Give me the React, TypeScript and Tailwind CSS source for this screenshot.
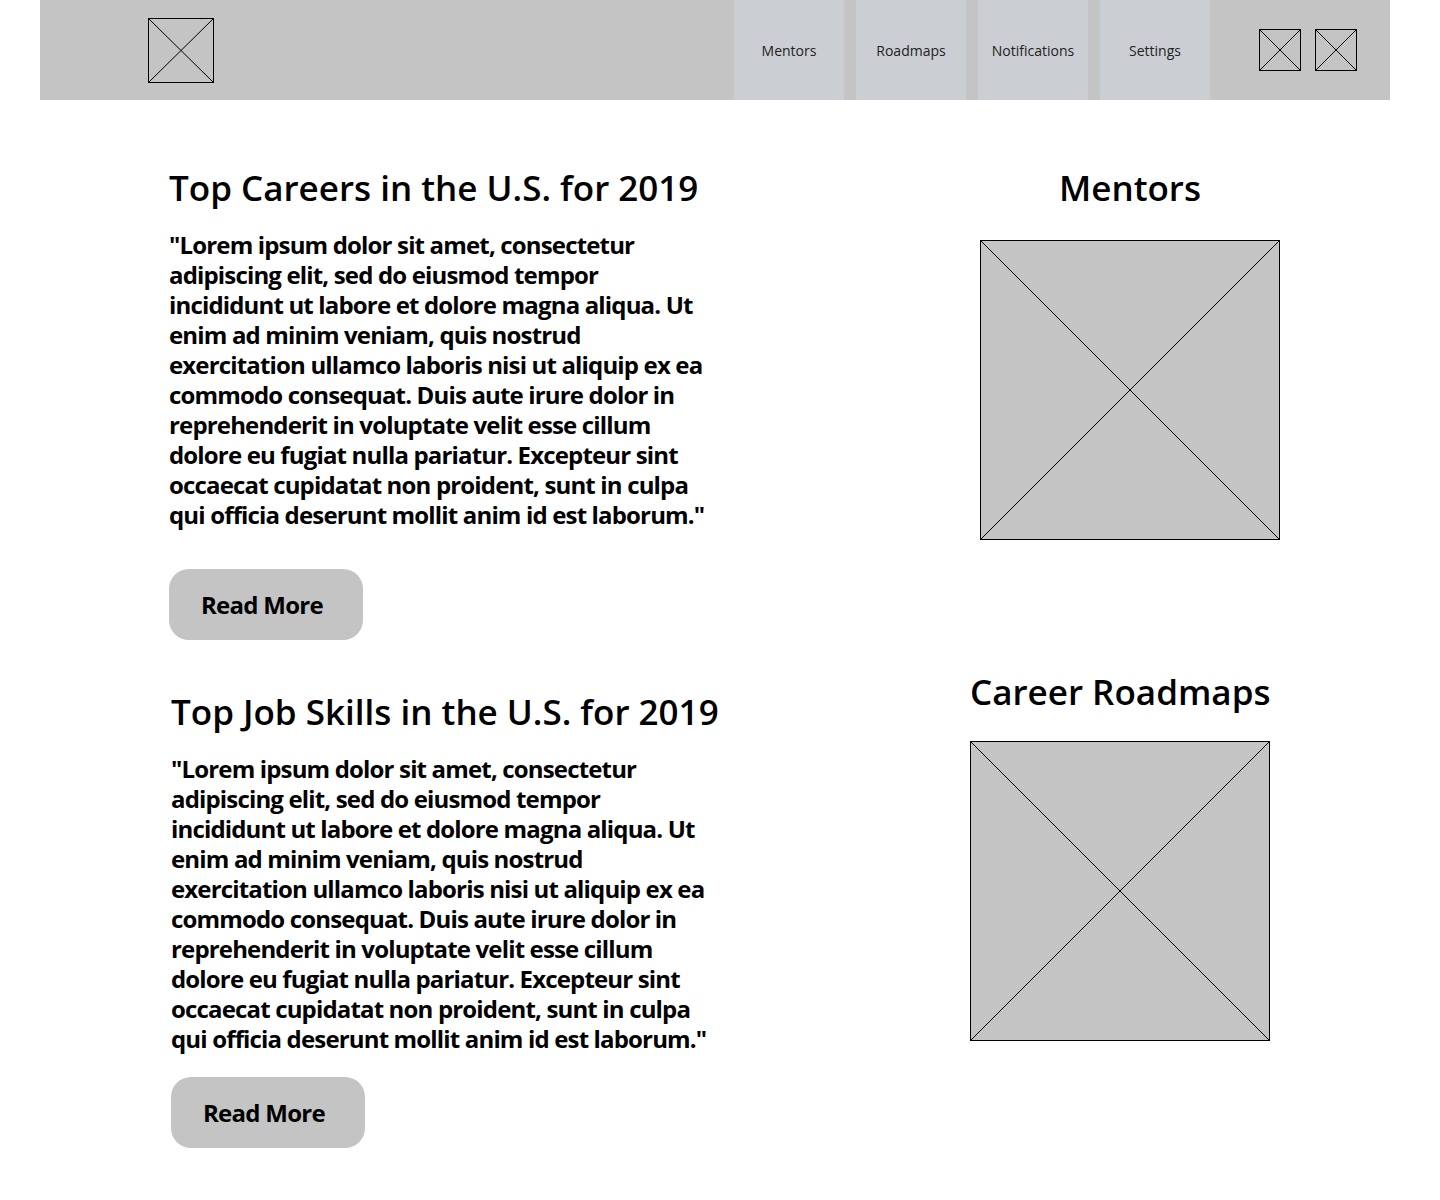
const navItems = ['Mentors', 'Roadmaps', 'Notifications', 'Settings']

const lorem =
  '"Lorem ipsum dolor sit amet, consectetur adipiscing elit, sed do eiusmod tempor incididunt ut labore et dolore magna aliqua. Ut enim ad minim veniam, quis nostrud exercitation ullamco laboris nisi ut aliquip ex ea commodo consequat. Duis aute irure dolor in reprehenderit in voluptate velit esse cillum dolore eu fugiat nulla pariatur. Excepteur sint occaecat cupidatat non proident, sunt in culpa qui officia deserunt mollit anim id est laborum."'

function Placeholder({ className }: { className: string }) {
  return (
    <div className={`relative bg-[#c4c4c4] border border-black ${className}`}>
      <svg className="absolute inset-0 h-full w-full" viewBox="0 0 100 100" preserveAspectRatio="none">
        <line x1="0" y1="0" x2="100" y2="100" stroke="black" strokeWidth="1" vectorEffect="non-scaling-stroke" />
        <line x1="100" y1="0" x2="0" y2="100" stroke="black" strokeWidth="1" vectorEffect="non-scaling-stroke" />
      </svg>
    </div>
  )
}

function Article({ title, className, buttonGap }: { title: string; className: string; buttonGap: string }) {
  return (
    <div className={className}>
      <h2 className="text-[35px] leading-[48px] font-semibold">{title}</h2>
      <p className="mt-[18px] w-[545px] text-[24px] leading-[30px] font-bold tracking-[-0.035em]">{lorem}</p>
      <button
        className={`${buttonGap} w-[194px] h-[71px] rounded-[20px] bg-[#c4c4c4] text-[24px] font-bold tracking-[-0.03em] pr-[8px]`}
      >
        Read More
      </button>
    </div>
  )
}

export default function App() {
  return (
    <div className="w-[1440px] min-h-[1200px] bg-white text-black font-['Open_Sans',sans-serif]">
      <header className="ml-10 mr-[50px] h-[100px] bg-[#c4c4c4] flex">
        <Placeholder className="ml-[108px] mt-[18px] w-[66px] h-[65px]" />
        <nav className="ml-auto flex gap-3">
          {navItems.map((item) => (
            <a key={item} className="w-[110px] bg-[#cbced3] flex items-center justify-center text-[14px] text-[#222]">
              {item}
            </a>
          ))}
        </nav>
        <div className="ml-[49px] mr-[33px] flex items-center gap-[14px]">
          <Placeholder className="w-[42px] h-[42px]" />
          <Placeholder className="w-[42px] h-[42px]" />
        </div>
      </header>

      <main className="flex">
        <div className="w-[800px] pl-[169px] pt-[64px]">
          <Article title="Top Careers in the U.S. for 2019" className="" buttonGap="mt-[39px]" />
          <Article title="Top Job Skills in the U.S. for 2019" className="mt-[48px] ml-[2px]" buttonGap="mt-[23px]" />
        </div>
        <div className="pl-[170px] pt-[64px]">
          <div className="ml-[10px] w-[300px]">
            <h2 className="text-center text-[35px] leading-[48px] font-semibold">Mentors</h2>
            <Placeholder className="mt-[28px] w-[300px] h-[300px]" />
          </div>
          <div className="mt-[128px] w-[300px]">
            <h2 className="text-center text-[35px] leading-[48px] font-semibold whitespace-nowrap">Career Roadmaps</h2>
            <Placeholder className="mt-[25px] w-[300px] h-[300px]" />
          </div>
        </div>
      </main>
    </div>
  )
}
